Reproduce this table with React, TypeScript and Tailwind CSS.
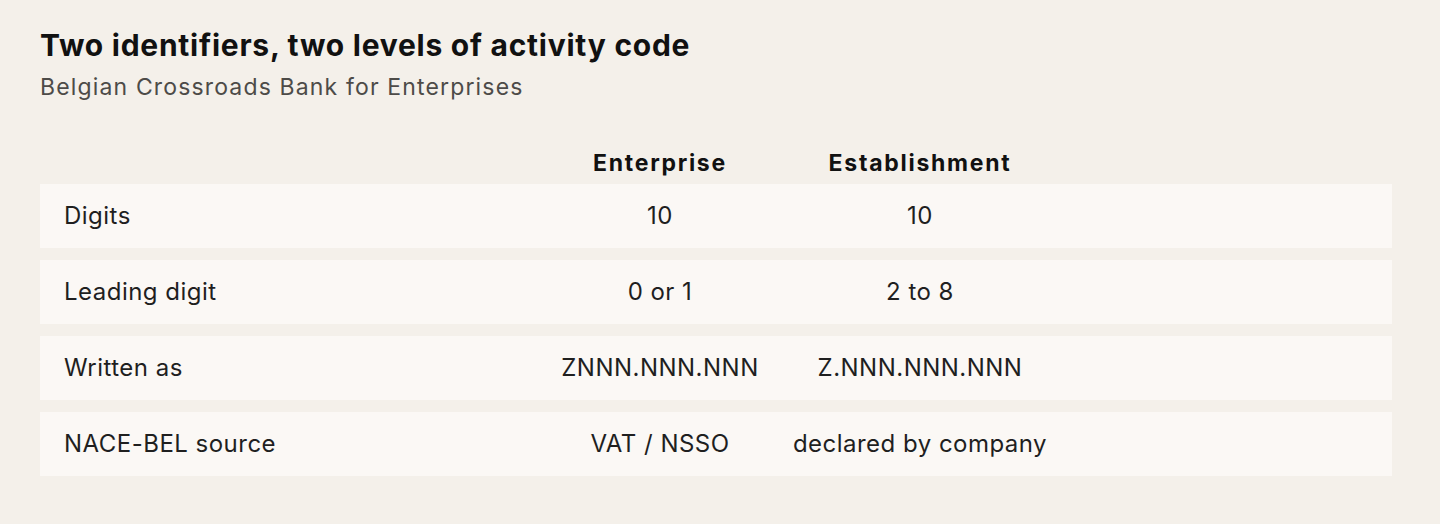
const rows = [
  { label: 'Digits', enterprise: '10', establishment: '10' },
  { label: 'Leading digit', enterprise: '0 or 1', establishment: '2 to 8' },
  { label: 'Written as', enterprise: 'ZNNN.NNN.NNN', establishment: 'Z.NNN.NNN.NNN' },
  { label: 'NACE-BEL source', enterprise: 'VAT / NSSO', establishment: 'declared by company' },
];

export default function App() {
  return (
    <div
      className="min-h-[524px] bg-[#f4f0ea] pl-10 pr-12 pt-[26px] text-[#1f1f1f]"
      style={{ fontFamily: 'Inter, "Noto Sans", sans-serif' }}
    >
      <h1 className="text-[30px] leading-[38px] font-bold tracking-[0.025em] text-[#111]">
        Two identifiers, two levels of activity code
      </h1>
      <p className="mt-[8px] text-[23px] leading-[30px] tracking-[0.05em] text-[#4d4b48]">
        Belgian Crossroads Bank for Enterprises
      </p>

      <div className="mt-[46px]">
        <div className="grid grid-cols-[490px_260px_260px_1fr] text-[23px] leading-[30px] font-bold tracking-[0.075em] text-[#111]">
          <div />
          <div className="text-center">Enterprise</div>
          <div className="text-center">Establishment</div>
          <div />
        </div>
        <div className="mt-[6px] flex flex-col gap-3">
          {rows.map(r => (
            <div
              key={r.label}
              className="grid h-16 grid-cols-[490px_260px_260px_1fr] items-center bg-[#fbf8f5] text-[24px] leading-[30px] tracking-[0.02em]"
            >
              <div className="pl-6">{r.label}</div>
              <div className="text-center">{r.enterprise}</div>
              <div className="text-center">{r.establishment}</div>
              <div />
            </div>
          ))}
        </div>
      </div>
    </div>
  );
}
